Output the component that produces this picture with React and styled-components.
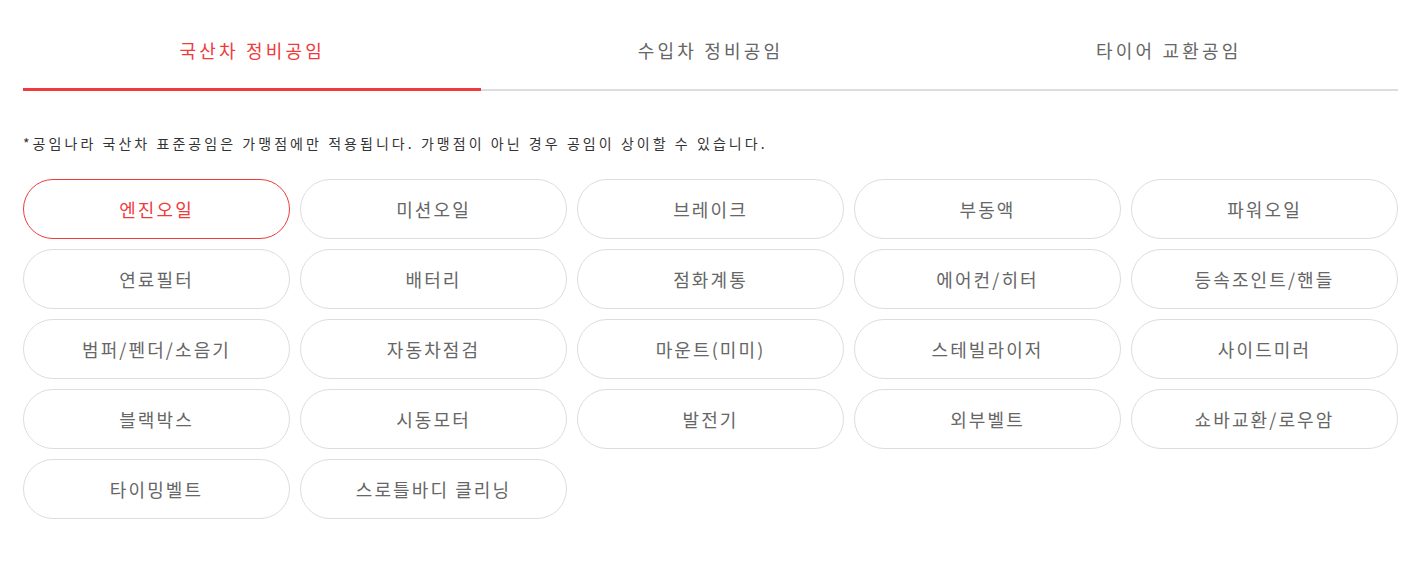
import React, { useState } from "react";
import styled, { createGlobalStyle } from "styled-components";

const GlobalStyle = createGlobalStyle`
  * {
    box-sizing: border-box;
  }
  body {
    margin: 0;
    padding: 0;
    background: #fff;
    font-family: "Noto Sans CJK KR", "Noto Sans", sans-serif;
  }
`;

const RED = "#ef3b3b";

const Wrapper = styled.main`
  padding: 0 24px 0 23px;
`;

const TabList = styled.div`
  display: flex;
  border-bottom: 2px solid #dddddd;
`;

const Tab = styled.button`
  flex: 1;
  margin-bottom: -2px;
  padding: 38px 0 26px;
  border: 0;
  border-bottom: 3px solid ${(p) => (p.$active ? RED : "transparent")};
  background: none;
  font-family: inherit;
  font-size: 18px;
  line-height: 24px;
  letter-spacing: 3.2px;
  color: ${(p) => (p.$active ? RED : "#666")};
  cursor: pointer;
`;

const Notice = styled.p`
  margin: 42px 0 26px;
  font-size: 14px;
  line-height: 20px;
  letter-spacing: 3.05px;
  color: #333;
`;

const Grid = styled.div`
  display: grid;
  grid-template-columns: repeat(5, 1fr);
  gap: 10px;
`;

const Item = styled.button`
  height: 60px;
  border-radius: 30px;
  border: 1px solid ${(p) => (p.$active ? RED : "#dddddd")};
  background: #fff;
  font-family: inherit;
  font-size: 18px;
  letter-spacing: 2.1px;
  color: ${(p) => (p.$active ? RED : "#666")};
  cursor: pointer;
`;

const tabs = ["국산차 정비공임", "수입차 정비공임", "타이어 교환공임"];

const items = [
  "엔진오일", "미션오일", "브레이크", "부동액", "파워오일",
  "연료필터", "배터리", "점화계통", "에어컨/히터", "등속조인트/핸들",
  "범퍼/펜더/소음기", "자동차점검", "마운트(미미)", "스테빌라이저", "사이드미러",
  "블랙박스", "시동모터", "발전기", "외부벨트", "쇼바교환/로우암",
  "타이밍벨트", "스로틀바디 클리닝",
];

export default function App() {
  const [tab, setTab] = useState(0);
  const [item, setItem] = useState(0);

  return (
    <>
      <GlobalStyle />
      <Wrapper>
        <TabList>
          {tabs.map((t, i) => (
            <Tab key={t} $active={tab === i} onClick={() => setTab(i)}>
              {t}
            </Tab>
          ))}
        </TabList>
        <Notice>
          *공임나라 국산차 표준공임은 가맹점에만 적용됩니다. 가맹점이 아닌 경우 공임이 상이할 수 있습니다.
        </Notice>
        <Grid>
          {items.map((name, i) => (
            <Item key={name} $active={item === i} onClick={() => setItem(i)}>
              {name}
            </Item>
          ))}
        </Grid>
      </Wrapper>
    </>
  );
}
